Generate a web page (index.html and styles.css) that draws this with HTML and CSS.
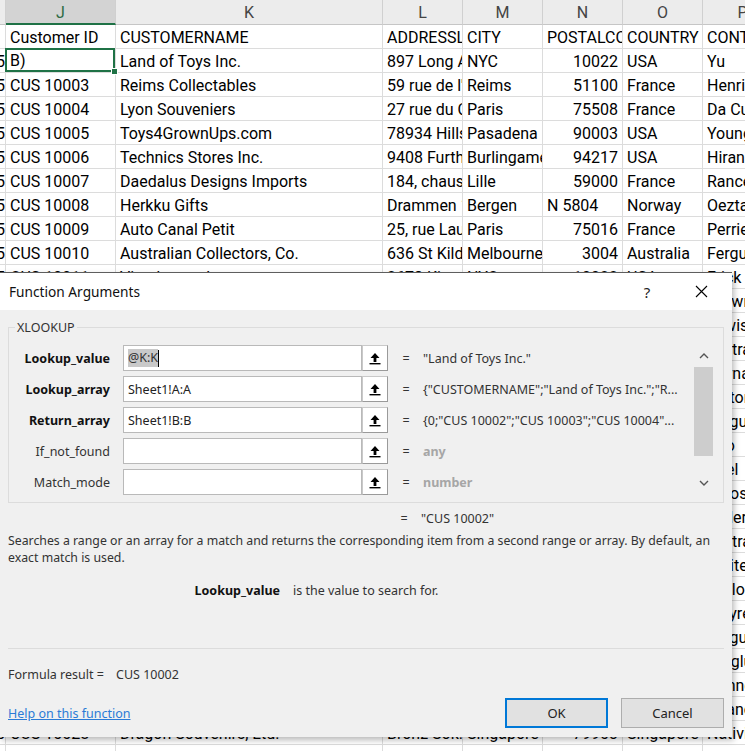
FILE: index.html
```html
<!DOCTYPE html>
<html>
<head>
<meta charset="utf-8">
<link rel="stylesheet" href="styles.css">
</head>
<body>
<div class="sheet">
  <div class="hd"></div><div class="hd act">J</div><div class="hd">K</div><div class="hd">L</div><div class="hd">M</div><div class="hd">N</div><div class="hd">O</div><div class="hd">P</div>

  <div class="c ci"></div><div class="c">Customer ID</div><div class="c">CUSTOMERNAME</div><div class="c">ADDRESSLINE1</div><div class="c">CITY</div><div class="c">POSTALCODE</div><div class="c">COUNTRY</div><div class="c">CONTACTLASTNAME</div>

  <div class="c ci"><span>5</span></div><div class="c sel">B)</div><div class="c">Land of Toys Inc.</div><div class="c">897 Long Airport Avenue</div><div class="c">NYC</div><div class="c n">10022</div><div class="c">USA</div><div class="c">Yu</div>

  <div class="c ci"><span>5</span></div><div class="c">CUS 10003</div><div class="c">Reims Collectables</div><div class="c">59 rue de l'Abbaye</div><div class="c">Reims</div><div class="c n">51100</div><div class="c">France</div><div class="c">Henriot</div>

  <div class="c ci"><span>5</span></div><div class="c">CUS 10004</div><div class="c">Lyon Souveniers</div><div class="c">27 rue du Colonel Pierre Avia</div><div class="c">Paris</div><div class="c n">75508</div><div class="c">France</div><div class="c">Da Cunha</div>

  <div class="c ci"><span>5</span></div><div class="c">CUS 10005</div><div class="c">Toys4GrownUps.com</div><div class="c">78934 Hillside Dr.</div><div class="c">Pasadena</div><div class="c n">90003</div><div class="c">USA</div><div class="c">Young</div>

  <div class="c ci"><span>5</span></div><div class="c">CUS 10006</div><div class="c">Technics Stores Inc.</div><div class="c">9408 Furth Circle</div><div class="c">Burlingame</div><div class="c n">94217</div><div class="c">USA</div><div class="c">Hirano</div>

  <div class="c ci"><span>5</span></div><div class="c">CUS 10007</div><div class="c">Daedalus Designs Imports</div><div class="c">184, chaussee de Tournai</div><div class="c">Lille</div><div class="c n">59000</div><div class="c">France</div><div class="c">Rance</div>

  <div class="c ci"><span>5</span></div><div class="c">CUS 10008</div><div class="c">Herkku Gifts</div><div class="c">Drammen 121, PR 744 Sentrum</div><div class="c">Bergen</div><div class="c">N 5804</div><div class="c">Norway</div><div class="c">Oeztan</div>

  <div class="c ci"><span>5</span></div><div class="c">CUS 10009</div><div class="c">Auto Canal Petit</div><div class="c">25, rue Lauriston</div><div class="c">Paris</div><div class="c n">75016</div><div class="c">France</div><div class="c">Perrier</div>

  <div class="c ci"><span>5</span></div><div class="c">CUS 10010</div><div class="c">Australian Collectors, Co.</div><div class="c">636 St Kilda Road</div><div class="c">Melbourne</div><div class="c n">3004</div><div class="c">Australia</div><div class="c">Ferguson</div>

  <div class="c ci"><span>5</span></div><div class="c">CUS 10011</div><div class="c">Vitachrome Inc.</div><div class="c">2678 Kingston Rd.</div><div class="c">NYC</div><div class="c n">10022</div><div class="c">USA</div><div class="c">Frick</div>

  <div class="c ci"></div><div class="c"></div><div class="c"></div><div class="c"></div><div class="c"></div><div class="c"></div><div class="c"></div><div class="c">Brown</div>
  <div class="c ci"></div><div class="c"></div><div class="c"></div><div class="c"></div><div class="c"></div><div class="c"></div><div class="c"></div><div class="c">Lewis</div>
  <div class="c ci"></div><div class="c"></div><div class="c"></div><div class="c"></div><div class="c"></div><div class="c"></div><div class="c"></div><div class="c">Cartrain</div>
  <div class="c ci"></div><div class="c"></div><div class="c"></div><div class="c"></div><div class="c"></div><div class="c"></div><div class="c"></div><div class="c">Hernandez</div>
  <div class="c ci"></div><div class="c"></div><div class="c"></div><div class="c"></div><div class="c"></div><div class="c"></div><div class="c"></div><div class="c">Victorino</div>
  <div class="c ci"></div><div class="c"></div><div class="c"></div><div class="c"></div><div class="c"></div><div class="c"></div><div class="c"></div><div class="c">Ferguson</div>
  <div class="c ci"></div><div class="c"></div><div class="c"></div><div class="c"></div><div class="c"></div><div class="c"></div><div class="c"></div><div class="c">Kuo</div>
  <div class="c ci"></div><div class="c"></div><div class="c"></div><div class="c"></div><div class="c"></div><div class="c"></div><div class="c"></div><div class="c">Roel</div>
  <div class="c ci"></div><div class="c"></div><div class="c"></div><div class="c"></div><div class="c"></div><div class="c"></div><div class="c"></div><div class="c">Moos</div>
  <div class="c ci"></div><div class="c"></div><div class="c"></div><div class="c"></div><div class="c"></div><div class="c"></div><div class="c"></div><div class="c">Keller</div>
  <div class="c ci"></div><div class="c"></div><div class="c"></div><div class="c"></div><div class="c"></div><div class="c"></div><div class="c"></div><div class="c">Cartrain</div>
  <div class="c ci"></div><div class="c"></div><div class="c"></div><div class="c"></div><div class="c"></div><div class="c"></div><div class="c"></div><div class="c">Whiteman</div>
  <div class="c ci"></div><div class="c"></div><div class="c"></div><div class="c"></div><div class="c"></div><div class="c"></div><div class="c"></div><div class="c">Taylor</div>
  <div class="c ci"></div><div class="c"></div><div class="c"></div><div class="c"></div><div class="c"></div><div class="c"></div><div class="c"></div><div class="c">Freyre</div>
  <div class="c ci"></div><div class="c"></div><div class="c"></div><div class="c"></div><div class="c"></div><div class="c"></div><div class="c"></div><div class="c">Ferguson</div>
  <div class="c ci"></div><div class="c"></div><div class="c"></div><div class="c"></div><div class="c"></div><div class="c"></div><div class="c"></div><div class="c">Berglund</div>
  <div class="c ci"></div><div class="c"></div><div class="c"></div><div class="c"></div><div class="c"></div><div class="c"></div><div class="c"></div><div class="c">Donnermeyer</div>
  <div class="c ci"></div><div class="c"></div><div class="c"></div><div class="c"></div><div class="c"></div><div class="c"></div><div class="c"></div><div class="c">Chandler</div>

  <div class="c ci"><span>5</span></div><div class="c">CUS 10028</div><div class="c">Dragon Souvenirs, Ltd.</div><div class="c">Bronz Sok.</div><div class="c">Singapore</div><div class="c n">79903</div><div class="c">Singapore</div><div class="c">Natividad</div>

  <div class="c ci"></div><div class="c"></div><div class="c"></div><div class="c"></div><div class="c"></div><div class="c"></div><div class="c"></div><div class="c"></div>
</div>

<div class="dialog">
  <div class="titlebar">
    <div class="title">Function Arguments</div>
    <div class="help">?</div>
    <div class="close">
      <svg width="13" height="13" viewBox="0 0 13 13"><path d="M1 1 L12 12 M12 1 L1 12" stroke="#000" stroke-width="1.1" fill="none"/></svg>
    </div>
  </div>
  <div class="dbody">
    <fieldset class="group">
      <legend>XLOOKUP</legend>
      <div class="args">
        <div class="arglist">
          <div class="arg">
            <div class="lbl b">Lookup_value</div>
            <div class="inp"><span class="hl">@K:K</span><span class="caret"></span></div>
            <div class="up"><svg width="12" height="13" viewBox="0 0 12 13"><path d="M6 1 L1.5 6 H4.6 V10 H7.4 V6 H10.5 Z" fill="#000"/><rect x="0.5" y="11" width="11" height="1.4" fill="#000"/></svg></div>
            <div class="eq">=</div>
            <div class="val">"Land of Toys Inc."</div>
          </div>
          <div class="arg">
            <div class="lbl b">Lookup_array</div>
            <div class="inp">Sheet1!A:A</div>
            <div class="up"><svg width="12" height="13" viewBox="0 0 12 13"><path d="M6 1 L1.5 6 H4.6 V10 H7.4 V6 H10.5 Z" fill="#000"/><rect x="0.5" y="11" width="11" height="1.4" fill="#000"/></svg></div>
            <div class="eq">=</div>
            <div class="val">{"CUSTOMERNAME";"Land of Toys Inc.";"R...</div>
          </div>
          <div class="arg">
            <div class="lbl b">Return_array</div>
            <div class="inp">Sheet1!B:B</div>
            <div class="up"><svg width="12" height="13" viewBox="0 0 12 13"><path d="M6 1 L1.5 6 H4.6 V10 H7.4 V6 H10.5 Z" fill="#000"/><rect x="0.5" y="11" width="11" height="1.4" fill="#000"/></svg></div>
            <div class="eq">=</div>
            <div class="val">{0;"CUS 10002";"CUS 10003";"CUS 10004"...</div>
          </div>
          <div class="arg">
            <div class="lbl">If_not_found</div>
            <div class="inp"></div>
            <div class="up"><svg width="12" height="13" viewBox="0 0 12 13"><path d="M6 1 L1.5 6 H4.6 V10 H7.4 V6 H10.5 Z" fill="#000"/><rect x="0.5" y="11" width="11" height="1.4" fill="#000"/></svg></div>
            <div class="eq">=</div>
            <div class="val dim">any</div>
          </div>
          <div class="arg">
            <div class="lbl">Match_mode</div>
            <div class="inp"></div>
            <div class="up"><svg width="12" height="13" viewBox="0 0 12 13"><path d="M6 1 L1.5 6 H4.6 V10 H7.4 V6 H10.5 Z" fill="#000"/><rect x="0.5" y="11" width="11" height="1.4" fill="#000"/></svg></div>
            <div class="eq">=</div>
            <div class="val dim">number</div>
          </div>
        </div>
        <div class="vscroll">
          <div class="sarrow"><svg width="10" height="6" viewBox="0 0 10 6"><path d="M1 5 L5 1 L9 5" stroke="#555" stroke-width="1.4" fill="none"/></svg></div>
          <div class="strack"><div class="thumb"></div></div>
          <div class="sarrow"><svg width="10" height="6" viewBox="0 0 10 6"><path d="M1 1 L5 5 L9 1" stroke="#555" stroke-width="1.4" fill="none"/></svg></div>
        </div>
      </div>
    </fieldset>

    <div class="result"><span class="eq">=</span><span class="val">"CUS 10002"</span></div>
    <div class="desc">Searches a range or an array for a match and returns the corresponding item from a second range or array. By default, an exact match is used.</div>
    <div class="pdesc"><span class="plbl">Lookup_value</span><span class="ptxt">is the value to search for.</span></div>
    <div class="sep"></div>
    <div class="fres"><span class="flbl">Formula result =</span><span>CUS 10002</span></div>
    <div class="foot">
      <a class="link" href="#">Help on this function</a>
      <div class="btns">
        <div class="btn ok">OK</div>
        <div class="btn">Cancel</div>
      </div>
    </div>
  </div>
</div>
</body>
</html>
```

FILE: styles.css
```css
html, body {
  margin: 0;
  padding: 0;
  width: 745px;
  height: 751px;
  overflow: hidden;
  background: #fff;
}

.sheet {
  display: grid;
  grid-template-columns: 6px 110px 267px 80px 80px 80px 80px 80px;
  grid-template-rows: 25px;
  grid-auto-rows: 24px;
  font-family: Roboto, "Liberation Sans", sans-serif;
  font-size: 16px;
  color: #000;
}

.hd {
  background: #ececec;
  border-right: 1px solid #d0d0d0;
  border-bottom: 1px solid #c6c6c6;
  box-sizing: border-box;
  text-align: center;
  line-height: 26px;
  color: #444;
  font-size: 16px;
}

.hd.act {
  background: #d3d3d3;
  color: #2e6b45;
  border-bottom: 2px solid #1f7246;
}

.c {
  box-sizing: border-box;
  border-right: 1px solid #dcdcdc;
  border-bottom: 1px solid #dcdcdc;
  padding: 0 4px;
  line-height: 25px;
  white-space: nowrap;
  overflow: hidden;
  position: relative;
}

.c.n {
  text-align: right;
}

.c.ci {
  padding: 0;
  display: flex;
  justify-content: flex-end;
}

.c.sel {
  overflow: visible;
  box-shadow: inset 0 0 0 2px #1f7246;
  margin: -1px 0 0 -1px;
  padding-left: 5px;
  line-height: 26px;
}

.c.sel::after {
  content: "";
  position: absolute;
  right: -3px;
  bottom: -3px;
  width: 5px;
  height: 5px;
  background: #1f7246;
  border: 1px solid #fff;
  z-index: 2;
}

/* Dialog */
.dialog {
  position: absolute;
  left: 0;
  top: 272px;
  width: 732px;
  height: 465px;
  background: #f0f0f0;
  box-shadow: 2px 3px 6px rgba(0, 0, 0, 0.28);
  font-family: "Noto Sans", "Open Sans", sans-serif;
  font-size: 12.5px;
  color: #222;
  z-index: 5;
}

.titlebar {
  box-sizing: border-box;
  height: 38px;
  background: #fff;
  border-top: 1px solid #5e5e5e;
  display: flex;
  align-items: center;
}

.title {
  flex: 1;
  padding-left: 9px;
  font-size: 13.7px;
  color: #111;
}

.help {
  width: 20px;
  text-align: center;
  font-size: 15px;
  color: #222;
  margin-right: 38px;
}

.close {
  width: 13px;
  height: 13px;
  margin-right: 24px;
  display: flex;
}

.dbody {
  padding: 0 8px 0 8px;
}

.group {
  margin: 9px 0 0 0;
  padding: 0;
  border: 1px solid #dcdcdc;
  height: 184px;
  box-sizing: border-box;
  min-width: 0;
}

.group legend {
  margin-left: 6px;
  padding: 0 2px;
  font-size: 12.5px;
  color: #333;
  line-height: 17px;
}

.args {
  display: flex;
  margin-top: 9px;
}

.arglist {
  flex: 1;
  display: flex;
  flex-direction: column;
  gap: 5px;
}

.arg {
  display: flex;
  align-items: center;
  height: 26px;
}

.lbl {
  width: 101px;
  text-align: right;
  margin-right: 13px;
  color: #333;
}

.lbl.b {
  font-weight: bold;
  color: #111;
}

.inp {
  box-sizing: border-box;
  width: 239px;
  height: 26px;
  background: #fff;
  border: 1px solid #b9b9b9;
  padding-left: 4px;
  display: flex;
  align-items: center;
  color: #222;
}

.hl {
  background: #c9c9c9;
  color: #333;
  line-height: 18px;
}

.caret {
  width: 1px;
  height: 17px;
  background: #000;
}

.up {
  box-sizing: border-box;
  width: 26px;
  height: 26px;
  background: #fff;
  border: 1px solid #c9c9c9;
  border-right-color: #9a9a9a;
  border-bottom-color: #9a9a9a;
  display: flex;
  align-items: center;
  justify-content: center;
}

.eq {
  width: 12px;
  margin-left: 12px;
  text-align: center;
  color: #333;
}

.val {
  margin-left: 11px;
  white-space: nowrap;
  color: #333;
}

.val.dim {
  color: #a6a6a6;
  font-weight: bold;
}

.vscroll {
  width: 19px;
  height: 149px;
  margin: 0 10px 0 5px;
  display: flex;
  flex-direction: column;
  background: #f0f0f0;
}

.sarrow {
  height: 22px;
  display: flex;
  align-items: center;
  justify-content: center;
}

.strack {
  flex: 1;
}

.thumb {
  height: 89px;
  background: #cdcdcd;
}

.result {
  display: flex;
  margin-top: 7px;
  line-height: 18px;
  padding-left: 390px;
}

.result .eq {
  margin-left: 0;
}

.desc {
  margin-top: 4px;
  line-height: 17px;
  color: #333;
  font-size: 12.3px;
}

.pdesc {
  display: flex;
  margin-top: 16px;
  line-height: 18px;
}

.plbl {
  width: 272px;
  text-align: right;
  font-weight: bold;
  color: #111;
}

.ptxt {
  margin-left: 13px;
  color: #333;
}

.sep {
  margin-top: 48px;
  margin-right: 0;
  border-top: 1px solid #dcdcdc;
}

.fres {
  display: flex;
  margin-top: 17px;
  line-height: 18px;
  color: #333;
}

.flbl {
  width: 108px;
}

.foot {
  display: flex;
  align-items: center;
  justify-content: space-between;
  margin-top: 14px;
}

.link {
  color: #2b7bd6;
  text-decoration: underline;
}

.btns {
  display: flex;
  gap: 13px;
}

.btn {
  box-sizing: border-box;
  width: 103px;
  height: 30px;
  background: #e1e1e1;
  border: 1px solid #adadad;
  display: flex;
  align-items: center;
  justify-content: center;
  color: #222;
  font-size: 13px;
}

.btn.ok {
  border: 2px solid #0078d7;
}
```
